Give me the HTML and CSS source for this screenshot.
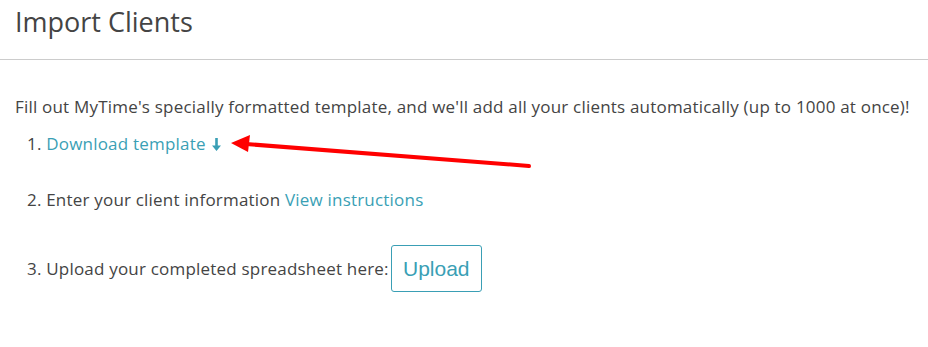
FILE: index.html
```html
<!DOCTYPE html>
<html lang="en">
<head>
    <meta charset="UTF-8">
    <title>Import Clients</title>
    <link rel="stylesheet" href="styles.css">
</head>
<body>
    <div class="header">
        <h1>Import Clients</h1>
    </div>

    <div class="content">
        <p class="intro">Fill out MyTime's specially formatted template, and we'll add all your clients automatically (up to 1000 at once)!</p>

        <div class="step step-one">
            1. <a href="#" class="link">Download template<svg class="down" width="9" height="13" viewBox="0 0 9 13"><path d="M3.2 0h2.6v7.5h3.2L4.5 13 0 7.5h3.2z" fill="currentColor"/></svg></a>
        </div>
        <div class="step step-two">
            2. Enter your client information <a href="#" class="link">View instructions</a>
        </div>
        <div class="step step-three">
            <span>3. Upload your completed spreadsheet here:</span>
            <button class="upload-button">Upload</button>
        </div>
    </div>

    <!-- annotation arrow -->
    <svg class="arrow" width="928" height="347" viewBox="0 0 928 347">
        <line x1="529" y1="166" x2="246" y2="144" stroke="#f00" stroke-width="4" stroke-linecap="round"/>
        <polygon points="231,143 250,135 248,152" fill="#f00"/>
    </svg>
</body>
</html>
```

FILE: styles.css
```css
body {
    font-family: "Open Sans", Arial, sans-serif;
    margin: 0;
    color: #444;
    background-color: #fff;
}

.header {
    padding: 3px 15px 0;
    height: 56px;
    border-bottom: 1px solid #ccc;
}

.header h1 {
    margin: 0;
    font-size: 27px;
    font-weight: normal;
    color: #444;
}

.content {
    padding: 0 15px;
}

.intro,
.step {
    font-size: 17px;
    line-height: 24px;
    letter-spacing: 0.2px;
}

.intro {
    margin: 35px 0 0;
}

.step {
    padding-left: 12px;
}

.step-one {
    margin-top: 13px;
}

.step-two {
    margin-top: 32px;
}

.step-three {
    margin-top: 33px;
    display: flex;
    align-items: center;
    gap: 2px;
}

.link {
    color: #3a9fb5;
    text-decoration: none;
}

.down {
    vertical-align: -1px;
    margin-left: 6px;
}

.upload-button {
    font-family: "Liberation Sans", Arial, sans-serif;
    font-size: 21px;
    color: #3a9fb5;
    background: #fff;
    border: 1px solid #3a9fb5;
    border-radius: 3px;
    width: 91px;
    height: 47px;
    cursor: pointer;
}

.arrow {
    position: absolute;
    left: 0;
    top: 0;
    pointer-events: none;
}
```
